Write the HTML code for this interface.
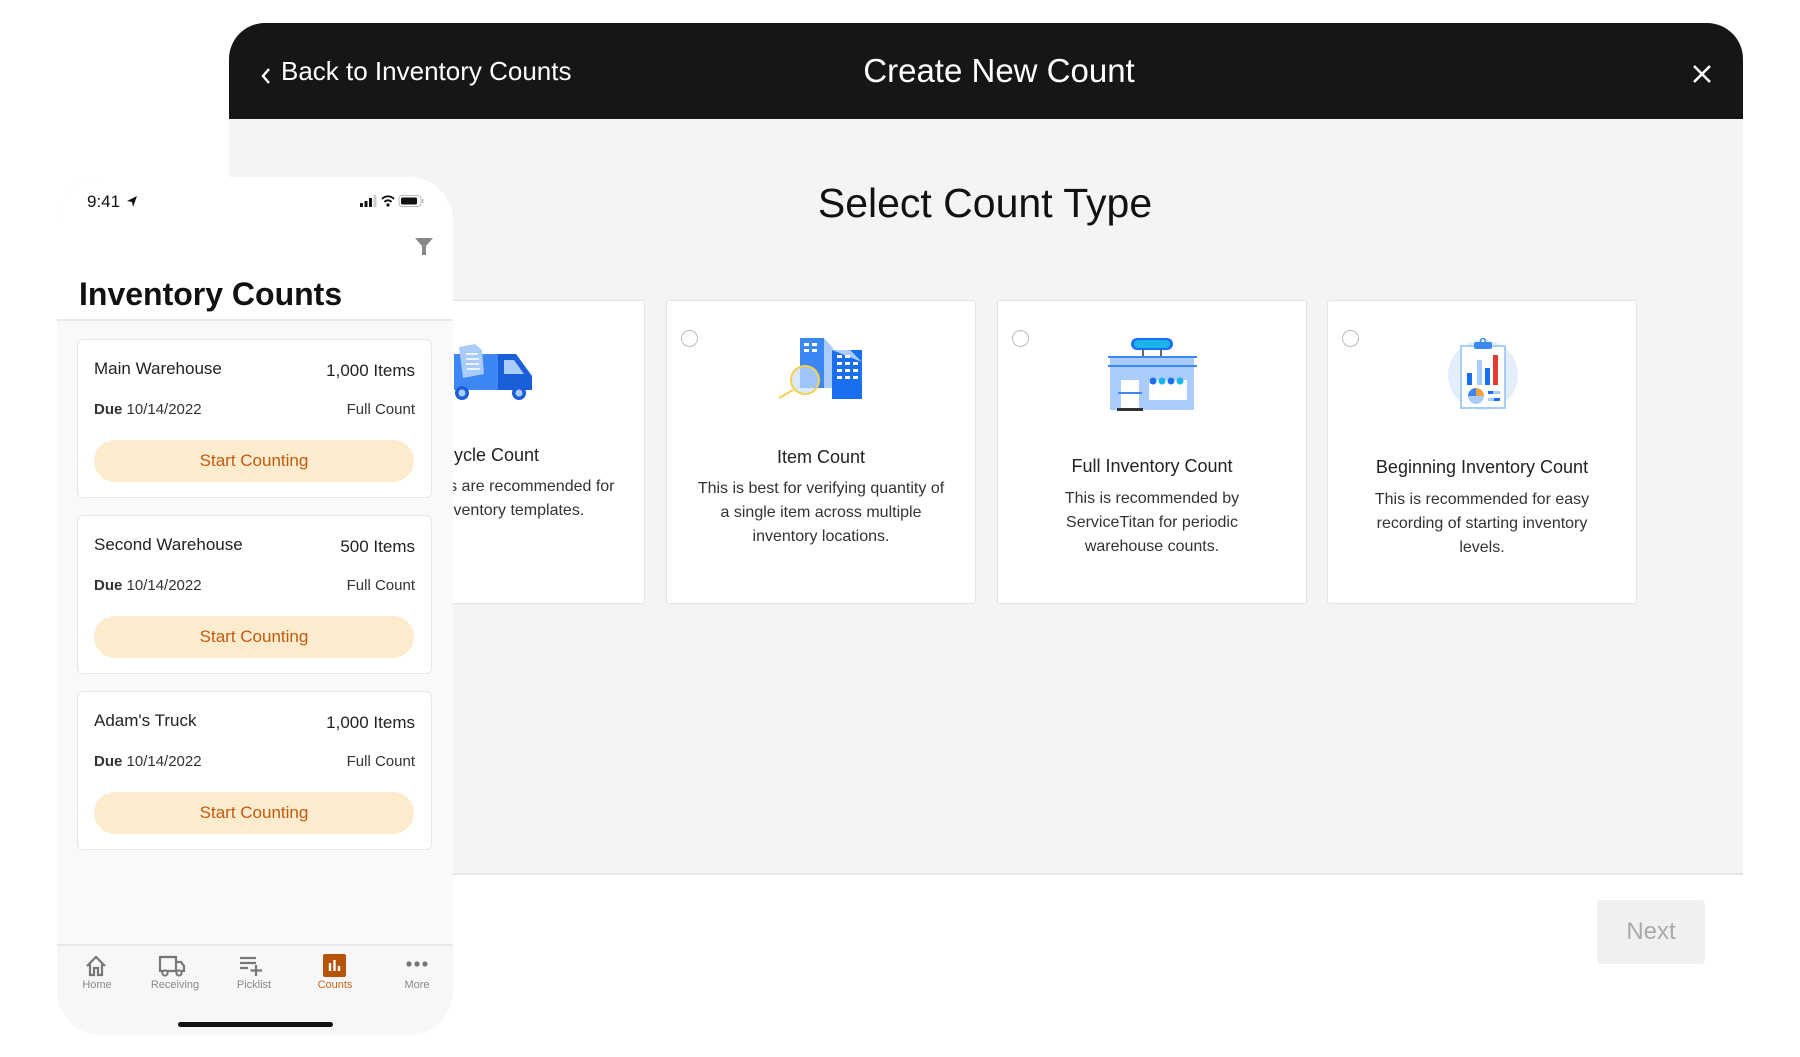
<!DOCTYPE html>
<html><head><meta charset="utf-8"><style>
*{margin:0;padding:0;box-sizing:border-box}
body{width:1800px;height:1057px;background:#fff;position:relative;overflow:hidden;font-family:"Liberation Sans",sans-serif;color:#222}
.abs{position:absolute}
.hdr{left:229px;top:23px;width:1514px;height:96px;background:#161616;border-radius:36px 36px 0 0}
.gray{left:229px;top:119px;width:1514px;height:756px;background:#f4f4f4;border-bottom:2px solid #e6e6e6}
.card{top:300px;width:310px;height:304px;background:#fff;border:1px solid #e4e4e4;border-radius:3px;text-align:center}
.card .t{position:absolute;left:0;right:0;font-size:18px;color:#222}
.card .d{position:absolute;left:4px;right:4px;font-size:16px;line-height:24px;color:#333;white-space:nowrap}
.radio{position:absolute;left:14px;top:29px;width:17px;height:17px;border:1.5px solid #bbb;border-radius:50%}
.phone{left:57px;top:177px;width:396px;height:858px;background:#f9f9f9;border-radius:44px;overflow:hidden}
.ptop{left:0;top:0;width:396px;height:144px;background:#fff;border-bottom:2px solid #e8e8e8}
.pc{left:20px;width:355px;height:159px;background:#fff;border:1.5px solid #e6e6e6;border-radius:6px}
.pc .n{position:absolute;left:16px;top:19px;font-size:17px;color:#222}
.pc .i{position:absolute;right:16px;top:21px;font-size:17px;color:#222}
.pc .du{position:absolute;left:16px;top:61px;font-size:15px;color:#333}
.pc .fc{position:absolute;right:16px;top:61px;font-size:15px;color:#333}
.pc .b{position:absolute;left:16px;top:100px;width:320px;height:42px;border-radius:21px;background:#fdebcd;color:#c25a10;font-size:17px;text-align:center;line-height:42px}
.nav{left:0;top:767px;width:396px;height:91px;border-top:2px solid #e8e8e8;background:#f7f7f7}
.ni{position:absolute;top:33px;width:80px;text-align:center;font-size:11px;color:#888}
</style></head><body>
<div class="abs hdr">
  <svg class="abs" style="left:31px;top:44px" width="12" height="18" viewBox="0 0 12 18"><path d="M9 2 L3 9 L9 16" stroke="#fff" stroke-width="2.4" fill="none"/></svg>
  <div class="abs" style="left:52px;top:33px;font-size:26px;color:#fff">Back to Inventory Counts</div>
  <div class="abs" style="left:570px;width:400px;top:29px;text-align:center;font-size:33px;color:#fff">Create New Count</div>
  <svg class="abs" style="left:1463px;top:41px" width="20" height="20" viewBox="0 0 20 20"><path d="M2 2 L18 18 M18 2 L2 18" stroke="#fff" stroke-width="2.6"/></svg>
</div>
<div class="abs gray"></div>
<div class="abs" style="left:685px;width:600px;top:180px;text-align:center;font-size:41px;color:#111">Select Count Type</div>

<div class="abs card" style="left:335px">
  <svg class="abs" style="left:118px;top:43px" width="80" height="56" viewBox="0 0 80 56"><rect x="0" y="10" width="50" height="36" fill="#3d87f5"/><path d="M44 10 H62 L78 32 V46 H44Z" fill="#1a5fd9"/><path d="M50 16 H60 L70 30 H50Z" fill="#a9ccfb"/><polygon points="5,3 21,0 28,6 30,30 9,34" fill="#a9ccfb"/><path d="M12 10 H24 M12 15 H25 M12 20 H25 M13 25 H26" stroke="#fff" stroke-width="1.5"/><circle cx="8" cy="49" r="7" fill="#1a5fd9"/><circle cx="8" cy="49" r="3.5" fill="#a9ccfb"/><circle cx="65" cy="49" r="7" fill="#1a5fd9"/><circle cx="65" cy="49" r="3.5" fill="#a9ccfb"/></svg>
  <div class="t" style="top:144px">Cycle Count</div>
  <div class="d" style="top:174px">Cycle counts are recommended for<br>Cycle Inventory templates.</div>
</div>
<div class="abs card" style="left:666px">
  <div class="radio"></div>
  <svg class="abs" style="left:110px;top:37px" width="90" height="62" viewBox="0 0 90 62"><rect x="23" y="0" width="24" height="50" fill="#3d87f5"/><path d="M47 0 L56 10 V50 H47Z" fill="#a9ccfb"/><rect x="55" y="12" width="30" height="49" fill="#1a6ff0"/><path d="M55 12 H73 L85 24" fill="#a9ccfb"/><g fill="#fff"><rect x="27" y="5" width="5" height="3"/><rect x="35" y="5" width="5" height="3"/><rect x="27" y="11" width="5" height="3"/><rect x="35" y="11" width="5" height="3"/><rect x="60" y="17" width="5" height="3"/><rect x="68" y="17" width="5" height="3"/><rect x="60" y="24" width="5" height="3"/><rect x="68" y="24" width="5" height="3"/><rect x="76" y="24" width="5" height="3"/><rect x="60" y="31" width="5" height="3"/><rect x="68" y="31" width="5" height="3"/><rect x="76" y="31" width="5" height="3"/><rect x="60" y="38" width="5" height="3"/><rect x="68" y="38" width="5" height="3"/><rect x="76" y="38" width="5" height="3"/></g><circle cx="28" cy="42" r="14" fill="#c9defc" fill-opacity=".7" stroke="#f7cf4a" stroke-width="2"/><path d="M16 52 L2 60" stroke="#f7cf4a" stroke-width="2"/></svg>
  <div class="t" style="top:146px">Item Count</div>
  <div class="d" style="top:176px">This is best for verifying quantity of<br>a single item across multiple<br>inventory locations.</div>
</div>
<div class="abs card" style="left:997px">
  <div class="radio"></div>
  <svg class="abs" style="left:110px;top:37px" width="90" height="74" viewBox="0 0 90 74"><rect x="23" y="0" width="42" height="12" rx="6" fill="#1a6ff0"/><rect x="26" y="2" width="36" height="8" rx="4" fill="#19b4e8"/><path d="M35 12 V18 M53 12 V18" stroke="#333" stroke-width="1.5"/><rect x="0" y="18" width="89" height="2" fill="#3d87f5"/><rect x="2" y="20" width="84" height="52" fill="#a9ccfb"/><rect x="0" y="27" width="89" height="2" fill="#3d87f5"/><rect x="13" y="42" width="18" height="30" fill="#fff"/><rect x="10" y="54" width="24" height="2" fill="#3d87f5"/><rect x="9" y="70" width="26" height="3" fill="#333"/><rect x="41" y="42" width="38" height="20" fill="#fff"/><g fill="#1a6ff0"><circle cx="45" cy="43" r="3.5"/><circle cx="63" cy="43" r="3.5"/></g><g fill="#19b4e8"><circle cx="54" cy="43" r="3.5"/><circle cx="72" cy="43" r="3.5"/></g></svg>
  <div class="t" style="top:155px">Full Inventory Count</div>
  <div class="d" style="top:186px">This is recommended by<br>ServiceTitan for periodic<br>warehouse counts.</div>
</div>
<div class="abs card" style="left:1327px">
  <div class="radio"></div>
  <svg class="abs" style="left:119px;top:37px" width="72" height="74" viewBox="0 0 72 74"><circle cx="36" cy="37" r="35" fill="#e4eefb"/><rect x="14" y="8" width="44" height="62" fill="#fff" stroke="#a9ccfb" stroke-width="2"/><rect x="27" y="4" width="18" height="7" rx="2" fill="#3d87f5"/><circle cx="36" cy="3" r="2.5" fill="none" stroke="#3d87f5" stroke-width="1.5"/><rect x="20" y="35" width="5" height="12" fill="#1a6ff0"/><rect x="30" y="22" width="5" height="25" fill="#a9ccfb"/><rect x="38" y="30" width="5" height="17" fill="#1a6ff0"/><rect x="46" y="17" width="5" height="30" fill="#e53b2c"/><circle cx="29" cy="58" r="8" fill="#a9ccfb"/><path d="M29 58 V50 A8 8 0 0 1 37 58Z" fill="#f0a33a"/><path d="M29 58 H21 A8 8 0 0 1 29 50Z" fill="#3d87f5"/><rect x="41" y="53" width="12" height="3" fill="#a9ccfb"/><rect x="41" y="53" width="5" height="3" fill="#1a6ff0"/><rect x="41" y="60" width="12" height="3" fill="#a9ccfb"/><rect x="47" y="60" width="6" height="3" fill="#1a6ff0"/></svg>
  <div class="t" style="top:156px">Beginning Inventory Count</div>
  <div class="d" style="top:187px">This is recommended for easy<br>recording of starting inventory<br>levels.</div>
</div>

<div class="abs" style="left:1597px;top:900px;width:108px;height:64px;background:#f0f0f0;border-radius:4px;text-align:center;line-height:64px;font-size:24px;color:#aaa">Next</div>

<div class="abs phone">
  <div class="abs ptop">
    <div class="abs" style="left:30px;top:15px;font-size:17px;color:#111">9:41</div>
    <svg class="abs" style="left:69px;top:18px" width="12" height="13" viewBox="0 0 12 13"><path d="M11 1 L1 6 L6 7 L7 12Z" fill="#111"/></svg>
    <svg class="abs" style="left:303px;top:17px" width="70" height="14" viewBox="0 0 70 14"><rect x="0" y="9" width="3" height="4" fill="#111"/><rect x="4.5" y="7" width="3" height="6" fill="#111"/><rect x="9" y="4" width="3" height="9" fill="#111"/><rect x="13.5" y="1" width="3" height="12" fill="#ccc"/><path d="M22 5 A8 8 0 0 1 34 5 M24.5 8 A4.5 4.5 0 0 1 31.5 8" stroke="#111" stroke-width="1.8" fill="none"/><circle cx="28" cy="11" r="1.6" fill="#111"/><rect x="39" y="1.5" width="22" height="11" rx="3" fill="none" stroke="#bbb" stroke-width="1"/><rect x="41" y="3.5" width="16" height="7" rx="1.5" fill="#111"/><rect x="62" y="5" width="1.5" height="4" fill="#bbb"/></svg>
    <svg class="abs" style="left:358px;top:61px" width="18" height="17" viewBox="0 0 18 17"><path d="M0 0 H18 L11 8 V17 H7 V8Z" fill="#888"/></svg>
    <div class="abs" style="left:22px;top:99px;font-size:32px;font-weight:bold;color:#111">Inventory Counts</div>
  </div>
  <div class="abs pc" style="top:162px"><div class="n">Main Warehouse</div><div class="i">1,000 Items</div><div class="du"><b>Due</b> 10/14/2022</div><div class="fc">Full Count</div><div class="b">Start Counting</div></div>
  <div class="abs pc" style="top:338px"><div class="n">Second Warehouse</div><div class="i">500 Items</div><div class="du"><b>Due</b> 10/14/2022</div><div class="fc">Full Count</div><div class="b">Start Counting</div></div>
  <div class="abs pc" style="top:514px"><div class="n">Adam's Truck</div><div class="i">1,000 Items</div><div class="du"><b>Due</b> 10/14/2022</div><div class="fc">Full Count</div><div class="b">Start Counting</div></div>
  <div class="abs nav">
    <svg class="abs" style="left:28px;top:9px" width="22" height="22" viewBox="0 0 22 22"><path d="M2 11 L11 2 L20 11 M5 9 V20 H9 V13 H13 V20 H17 V9" stroke="#777" stroke-width="2.2" fill="none"/></svg>
    <div class="ni" style="left:0">Home</div>
    <svg class="abs" style="left:101px;top:9px" width="28" height="22" viewBox="0 0 28 22"><path d="M2 2 H18 V16 H2Z M18 7 H23 L26 11 V16 H18" stroke="#777" stroke-width="2.2" fill="none"/><circle cx="7" cy="18" r="2.6" fill="#f7f7f7" stroke="#777" stroke-width="2"/><circle cx="21" cy="18" r="2.6" fill="#f7f7f7" stroke="#777" stroke-width="2"/></svg>
    <div class="ni" style="left:78px">Receiving</div>
    <svg class="abs" style="left:182px;top:9px" width="26" height="22" viewBox="0 0 26 22"><path d="M1 3 H17 M1 8 H17 M1 13 H9 M17 10 V21 M11.5 15.5 H23" stroke="#777" stroke-width="2.2"/></svg>
    <div class="ni" style="left:157px">Picklist</div>
    <svg class="abs" style="left:266px;top:8px" width="23" height="23" viewBox="0 0 23 23"><rect width="23" height="23" rx="2" fill="#b8530c"/><path d="M7 9 V17 M11.5 6 V17 M16 12 V17" stroke="#fff" stroke-width="2.4"/></svg>
    <div class="ni" style="left:238px;color:#c8661c">Counts</div>
    <svg class="abs" style="left:349px;top:15px" width="22" height="6" viewBox="0 0 22 6"><circle cx="3" cy="3" r="2.6" fill="#777"/><circle cx="11" cy="3" r="2.6" fill="#777"/><circle cx="19" cy="3" r="2.6" fill="#777"/></svg>
    <div class="ni" style="left:320px">More</div>
    <div class="abs" style="left:121px;top:76px;width:155px;height:5px;border-radius:3px;background:#111"></div>
  </div>
</div>
</body></html>
